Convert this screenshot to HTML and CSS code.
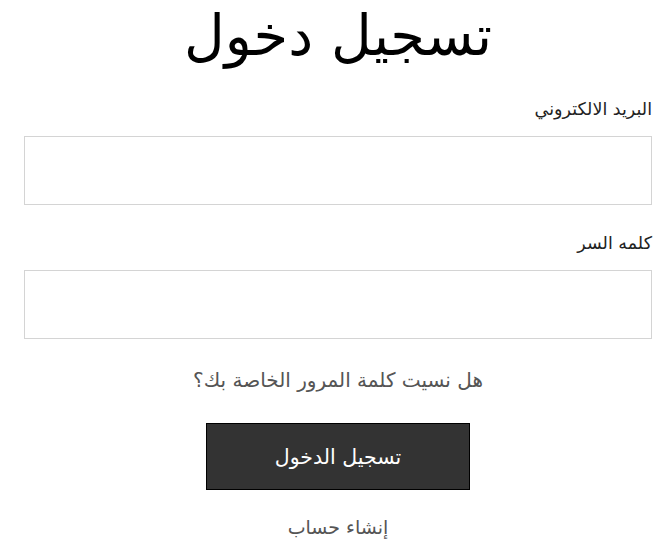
FILE: index.html
```html
<!DOCTYPE html>
<html lang="ar" dir="rtl">
<head>
<meta charset="utf-8">
<link rel="stylesheet" href="styles.css">
</head>
<body>
<main class="login">
  <h1 class="title">تسجيل دخول</h1>
  <form class="form">
    <label class="label" for="email">البريد الالكتروني</label>
    <input class="field" id="email" type="email">
    <label class="label" for="pass">كلمه السر</label>
    <input class="field" id="pass" type="password">
    <a class="forgot" href="#">هل نسيت كلمة المرور الخاصة بك؟</a>
    <button class="submit" type="button">تسجيل الدخول</button>
    <a class="create" href="#">إنشاء حساب</a>
  </form>
</main>
</body>
</html>
```

FILE: styles.css
```css
* { box-sizing: border-box; }
html, body { margin: 0; padding: 0; background: #fff; }
body {
  font-family: "DejaVu Sans", "Noto Sans", sans-serif;
  color: #111;
}
.login {
  width: 672px;
  padding: 0 20px 0 24px;
}
.title {
  margin: 0;
  padding-top: 4px;
  height: 84px;
  text-align: center;
  font-weight: normal;
  font-size: 56px;
  line-height: 64px;
  color: #000;
}
.form {
  display: flex;
  flex-direction: column;
}
.label {
  font-size: 17.5px;
  line-height: 22px;
  height: 22px;
  margin-top: 14px;
  margin-bottom: 16px;
  color: #222;
}
.field {
  display: block;
  width: 628px;
  height: 69px;
  border: 1px solid #d4d4d4;
  background: #fff;
  margin: 0;
  margin-bottom: 13px;
}
.forgot {
  align-self: center;
  margin-top: 14px;
  font-size: 20px;
  line-height: 28px;
  color: #555;
  text-decoration: none;
}
.submit {
  align-self: center;
  margin-top: 29px;
  width: 264px;
  height: 67px;
  background: #333;
  border: 1px solid #000;
  color: #fff;
  font-family: inherit;
  font-size: 20.5px;
}
.create {
  align-self: center;
  margin-top: 24px;
  font-size: 19px;
  line-height: 26px;
  color: #555;
  text-decoration: none;
}
```
